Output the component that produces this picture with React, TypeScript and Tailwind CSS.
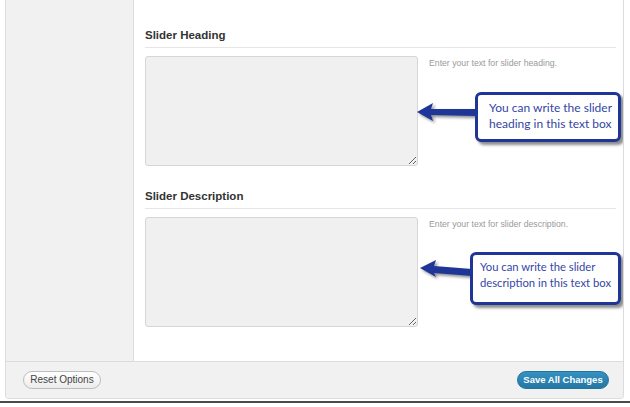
function Arrow({ points, className }: { points: string; className: string }) {
  return (
    <svg
      className={`absolute drop-shadow-[2px_2px_1.5px_rgba(0,0,0,0.45)] ${className}`}
      width="70"
      height="36"
      viewBox="0 0 70 36"
    >
      <polygon points={points} fill="#1f3597" />
    </svg>
  );
}

function Section({
  title,
  hint,
  first,
  children,
}: {
  title: string;
  hint: string;
  first?: boolean;
  children: React.ReactNode;
}) {
  return (
    <div className={first ? "" : "mt-[23px]"}>
      <h3 className="border-b border-[#e6e6e6] pb-[5px] text-[11.5px] font-bold leading-[14px] text-[#333]">
        {title}
      </h3>
      <div className="relative mt-[8px] flex items-start">
        <textarea
          className="h-[110px] w-[273px] shrink-0 rounded-[3px] border border-[#d6d6d6] bg-[#f0f0f0] outline-none"
          defaultValue=""
        />
        <p className="ml-[11px] mt-[2px] text-[8.7px] leading-[10px] text-[#9a9a9a]">{hint}</p>
        {children}
      </div>
    </div>
  );
}

export default function App() {
  const calloutText =
    "absolute rounded-[6px] border-[3px] border-[#1f3597] bg-white leading-[16px] text-[#3346a6] shadow-[3px_3px_3px_rgba(0,0,0,0.45)] font-['Lato','Liberation_Sans',sans-serif] whitespace-nowrap";

  return (
    <div className="relative h-[407px] w-[630px] overflow-hidden bg-white font-['Liberation_Sans',Arial,sans-serif]">
      <div className="ml-[5px] w-[619px] overflow-hidden rounded-b-[4px] border-x border-b border-[#dcdcdc]">
        <div className="flex h-[361px]">
          <aside className="w-[128px] shrink-0 border-r border-[#dcdcdc] bg-[#f1f1f1]" />
          <main className="flex-1 pl-[11px] pr-[7px] pt-[28px]">
            <Section first title="Slider Heading" hint="Enter your text for slider heading.">
              <Arrow
                className="left-[265px] top-[39px]"
                points="7,17 23,8 21,14 67,14 67,21 21,20 23,26"
              />
              <div className={`${calloutText} left-[330px] top-[36px] h-[50px] w-[146px] pl-[11px] pt-[5px] text-[12px]`}>
                You can write the slider
                <br />
                heading in this text box
              </div>
            </Section>
            <Section title="Slider Description" hint="Enter your text for slider description.">
              <Arrow
                className="left-[265px] top-[32px]"
                points="10,19 26,11 24,17 62,20 62,27 24,24 26,28"
              />
              <div className={`${calloutText} left-[325px] top-[35px] h-[53px] w-[151px] pl-[7px] pt-[4px] text-[11.25px]`}>
                You can write the slider
                <br />
                description in this text box
              </div>
            </Section>
          </main>
        </div>
        <footer className="flex h-[37px] items-center justify-between border-t border-[#dcdcdc] bg-[#f1f1f1] pl-[17px] pr-[14px]">
          <button
            type="button"
            className="h-[18px] w-[78px] rounded-full border border-[#bdbdbd] bg-linear-to-b from-white to-[#ececec] text-[10px] leading-none text-[#444]"
          >
            Reset Options
          </button>
          <button
            type="button"
            className="h-[18px] w-[92px] rounded-full border border-[#21759b] bg-linear-to-b from-[#3592c2] to-[#2576a4] text-[9.5px] font-bold leading-none text-white"
          >
            Save All Changes
          </button>
        </footer>
      </div>
      <div className="mt-[2px] h-[2px] bg-[#4a4a4a]" />
    </div>
  );
}
